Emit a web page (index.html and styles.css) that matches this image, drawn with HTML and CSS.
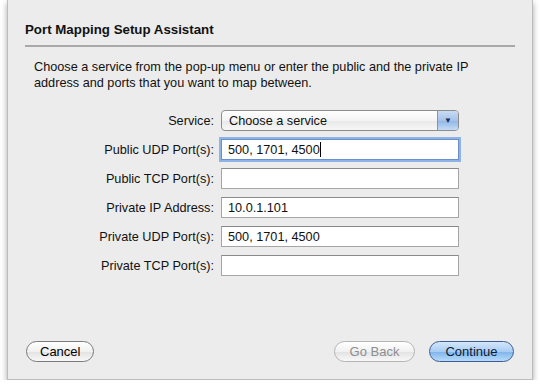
FILE: index.html
```html
<!DOCTYPE html>
<html lang="en">
<head>
  <meta charset="UTF-8">
  <title>Port Mapping Setup Assistant</title>
  <link rel="stylesheet" href="styles.css">
</head>
<body>
  <div class="sheet">
    <h1 class="sheet-title">Port Mapping Setup Assistant</h1>
    <p class="intro">Choose a service from the pop-up menu or enter the public and the private IP address and ports that you want to map between.</p>

    <div class="form">
      <div class="form-row">
        <label>Service:</label>
        <div class="popup">
          <span class="popup-value">Choose a service</span>
          <span class="popup-arrow">&#9660;</span>
        </div>
      </div>
      <div class="form-row">
        <label>Public UDP Port(s):</label>
        <div class="field focused">500, 1701, 4500<span class="caret"></span></div>
      </div>
      <div class="form-row">
        <label>Public TCP Port(s):</label>
        <div class="field"></div>
      </div>
      <div class="form-row">
        <label>Private IP Address:</label>
        <div class="field">10.0.1.101</div>
      </div>
      <div class="form-row">
        <label>Private UDP Port(s):</label>
        <div class="field">500, 1701, 4500</div>
      </div>
      <div class="form-row">
        <label>Private TCP Port(s):</label>
        <div class="field"></div>
      </div>
    </div>

    <div class="buttons">
      <button class="btn">Cancel</button>
      <div class="spacer"></div>
      <button class="btn btn-back" disabled>Go Back</button>
      <button class="btn btn-default">Continue</button>
    </div>
  </div>
</body>
</html>
```

FILE: styles.css
```css
body {
  margin: 0;
  background: #ffffff;
  font-family: 'Liberation Sans', Arial, sans-serif;
  font-size: 12.7px;
  color: #111;
}

.sheet {
  box-sizing: border-box;
  width: 526px;
  height: 380px;
  margin-left: 7px;
  background: #ececec;
  border: 1px solid #bcbcbc;
  border-top: none;
  box-shadow: 0 3px 6px rgba(0, 0, 0, 0.35);
  padding: 22px 17px 0 17px;
  display: flex;
  flex-direction: column;
}

.sheet-title {
  margin: 0;
  font-size: 13.3px;
  font-weight: bold;
  line-height: 16px;
  padding-bottom: 7px;
  border-bottom: 2px solid #a8a8a8;
}

.intro {
  margin: 12px 0 0 9px;
  line-height: 16px;
  width: 460px;
}

.form {
  margin-top: 19px;
  display: flex;
  flex-direction: column;
  gap: 8px;
}

.form-row {
  display: flex;
  align-items: center;
  height: 21px;
}

.form-row label {
  width: 189px;
  text-align: right;
  padding-right: 7px;
}

.field {
  box-sizing: border-box;
  width: 238px;
  height: 21px;
  background: #fff;
  border: 1px solid #a5a5a5;
  border-top-color: #8a8a8a;
  padding: 2px 6px;
  line-height: 16px;
}

.field.focused {
  border: 1px solid #6b8fc6;
  box-shadow: 0 0 0 2px #8eb3e6;
}

.caret {
  display: inline-block;
  width: 1px;
  height: 15px;
  background: #000;
  vertical-align: -3px;
}

.popup {
  box-sizing: border-box;
  width: 238px;
  height: 21px;
  display: flex;
  border: 1px solid #8c8c8c;
  border-radius: 4px;
  background: linear-gradient(#ffffff, #f4f4f4 50%, #e8e8e8 51%, #f7f7f7);
  overflow: hidden;
}

.popup-value {
  flex: 1;
  padding: 2px 7px;
  line-height: 16px;
}

.popup-arrow {
  width: 20px;
  border-left: 1px solid #7d95bb;
  background: linear-gradient(#c9dbf3, #a5c3ea 50%, #8fb5e6 51%, #c5dcf7);
  color: #1b2c56;
  font-size: 8px;
  text-align: center;
  line-height: 19px;
}

.buttons {
  margin-top: auto;
  margin-bottom: 17px;
  display: flex;
  align-items: center;
  gap: 14px;
  padding: 0 1px 0 1px;
}

.spacer {
  flex: 1;
}

.btn {
  font-family: inherit;
  font-size: 13px;
  height: 21px;
  padding: 0 13px;
  border-radius: 11px;
  border: 1px solid #7b7b7b;
  background: linear-gradient(#ffffff, #f1f1f1 50%, #e2e2e2 51%, #f8f8f8);
  color: #000;
  line-height: 19px;
}

.btn-back {
  width: 81px;
  color: #8e8e8e;
  border-color: #b4b4b4;
}

.btn-default {
  width: 85px;
  border-color: #3e5d93;
  background: linear-gradient(#d4e6fa, #a8cdf3 50%, #7fb3ea 51%, #b7dcfb);
  color: #0d1a33;
}
```
